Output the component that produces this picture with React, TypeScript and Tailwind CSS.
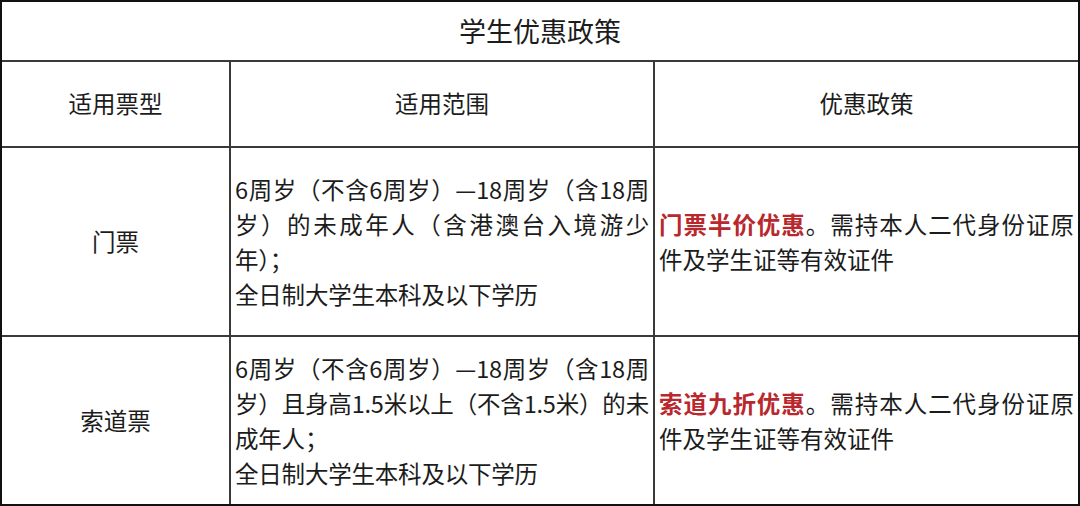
const FONT = "font-['Noto_Sans_CJK_SC','Noto_Sans',sans-serif]";

// full lines are stretched to the cell width, last lines sit left
function Line({ text, full }: { text: React.ReactNode; full?: boolean }) {
  return (
    <div
      className={
        full
          ? "whitespace-nowrap text-justify [text-align-last:justify]"
          : "whitespace-nowrap text-left"
      }
    >
      {text}
    </div>
  );
}

function Red({ children }: { children: React.ReactNode }) {
  return <span className="font-bold text-[#b8282d]">{children}</span>;
}

const rows = [
  {
    type: "门票",
    scope: [
      "6周岁（不含6周岁）—18周岁（含18周",
      "岁）的未成年人（含港澳台入境游少",
      "年）；",
      "全日制大学生本科及以下学历",
    ],
    lead: "门票半价优惠",
  },
  {
    type: "索道票",
    scope: [
      "6周岁（不含6周岁）—18周岁（含18周",
      "岁）且身高1.5米以上（不含1.5米）的未",
      "成年人；",
      "全日制大学生本科及以下学历",
    ],
    lead: "索道九折优惠",
  },
];

export default function App() {
  return (
    <div className={`${FONT} w-[1080px] h-[506px] bg-white text-[#1c1c1c]`}>
      <div className="w-full h-full border-2 border-[#111] bg-[#3a3a3a] grid grid-cols-[227px_422px_1fr] grid-rows-[58px_84px_187px_1fr] gap-[2px]">
        <div className="col-span-3 bg-white flex items-center justify-center text-[27px]">
          学生优惠政策
        </div>

        <div className="bg-white flex items-center justify-center text-[23.5px]">适用票型</div>
        <div className="bg-white flex items-center justify-center text-[23.5px]">适用范围</div>
        <div className="bg-white flex items-center justify-center text-[23.5px]">优惠政策</div>

        {rows.map((row) => (
          <>
            <div key={row.type + "t"} className="bg-white flex items-center justify-center text-[23.5px]">
              {row.type}
            </div>
            <div key={row.type + "s"} className="bg-white flex flex-col justify-center px-[4px] text-[23.5px] leading-[35px] tracking-[-0.2px]">
              {row.scope.map((line, i) => (
                <Line key={i} text={line} full={i < 2} />
              ))}
            </div>
            <div key={row.type + "p"} className="bg-white flex flex-col justify-center px-[4px] text-[23.5px] leading-[35px]">
              <Line
                full
                text={
                  <>
                    <Red>{row.lead}</Red>。需持本人二代身份证原
                  </>
                }
              />
              <Line text="件及学生证等有效证件" />
            </div>
          </>
        ))}
      </div>
    </div>
  );
}
